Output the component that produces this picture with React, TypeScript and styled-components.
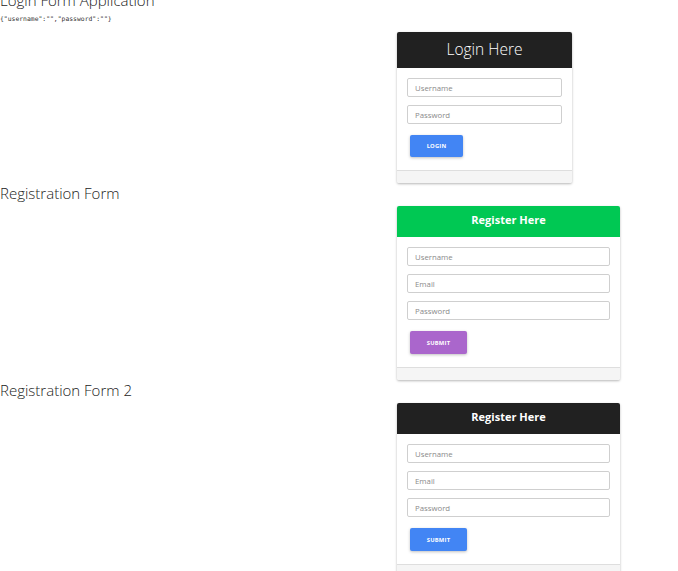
import React from "react";
import styled, { createGlobalStyle } from "styled-components";

const Global = createGlobalStyle`
  html, body { margin: 0; padding: 0; background: #fff; }
  body { font-family: "Open Sans", "Noto Sans", sans-serif; color: #222; }
  * { box-sizing: border-box; }
`;

const Page = styled.div`
  display: flex;
  flex-direction: column;
  width: 678px;
`;

const Title = styled.h2<{ $first?: boolean }>`
  margin: ${(p) => (p.$first ? "-10px 0 0" : "0")};
  font-size: 15px;
  font-weight: 300;
  line-height: 20px;
  color: #222;
`;

const Json = styled.pre`
  margin: 5px 0 0;
  font-family: "DejaVu Sans Mono", monospace;
  font-size: 6.4px;
  line-height: 8px;
  color: #333;
  height: 12px;
`;

const CardRow = styled.div<{ $top: number }>`
  display: flex;
  padding-left: 397px;
  margin-top: ${(p) => p.$top}px;
`;

const Card = styled.div<{ $width: number }>`
  width: ${(p) => p.$width}px;
  background: #fff;
  border-radius: 2px;
  overflow: hidden;
  box-shadow: 0 1px 3px rgba(0, 0, 0, 0.18), 0 1px 2px rgba(0, 0, 0, 0.12);
`;

const Header = styled.div<{ $bg: string; $height: number; $variant: "light" | "bold" }>`
  height: ${(p) => p.$height}px;
  background: ${(p) => p.$bg};
  color: #fff;
  display: flex;
  align-items: center;
  justify-content: center;
  font-size: ${(p) => (p.$variant === "light" ? "15.5px" : "11px")};
  font-weight: ${(p) => (p.$variant === "light" ? 300 : 700)};
  padding-bottom: ${(p) => (p.$variant === "light" ? "2px" : "4px")};
`;

const Body = styled.form`
  display: flex;
  flex-direction: column;
  gap: 8px;
  padding: 10px 10px 13px;
`;

const Input = styled.input`
  height: 19px;
  width: 100%;
  border: 1px solid #cfcfcf;
  border-radius: 2px;
  padding: 0 7px;
  font-family: "Open Sans", sans-serif;
  font-size: 7.8px;
  color: #333;
  outline: none;
  &::placeholder { color: #8a8a8a; }
`;

const Button = styled.button<{ $bg: string; $width: number; $height: number }>`
  margin: 3px 0 0 3px;
  width: ${(p) => p.$width}px;
  height: ${(p) => p.$height}px;
  background: ${(p) => p.$bg};
  color: #fff;
  border: none;
  border-radius: 2px;
  font-family: "Open Sans", sans-serif;
  font-size: 5.8px;
  font-weight: 700;
  letter-spacing: 0.2px;
  text-transform: uppercase;
  box-shadow: 0 1px 3px rgba(0, 0, 0, 0.25);
  padding: 0;
`;

const Footer = styled.div`
  height: 13px;
  background: #f5f5f5;
  border-top: 1px solid #dedede;
`;

function FormCard(props: {
  width: number;
  title: string;
  headerBg: string;
  headerHeight: number;
  variant: "light" | "bold";
  fields: string[];
  button: string;
  buttonBg: string;
  buttonWidth: number;
  buttonHeight: number;
}) {
  return (
    <Card $width={props.width}>
      <Header $bg={props.headerBg} $height={props.headerHeight} $variant={props.variant}>
        {props.title}
      </Header>
      <Body onSubmit={(e) => e.preventDefault()}>
        {props.fields.map((f) => (
          <Input key={f} placeholder={f} type={f === "Password" ? "password" : "text"} />
        ))}
        <Button type="submit" $bg={props.buttonBg} $width={props.buttonWidth} $height={props.buttonHeight}>
          {props.button}
        </Button>
      </Body>
      <Footer />
    </Card>
  );
}

export default function App() {
  return (
    <Page>
      <Global />
      <Title $first>Login Form Application</Title>
      <Json>{'{"username":"","password":""}'}</Json>
      <CardRow $top={5}>
        <FormCard
          width={175}
          title="Login Here"
          headerBg="#212121"
          headerHeight={36}
          variant="light"
          fields={["Username", "Password"]}
          button="Login"
          buttonBg="#4285f4"
          buttonWidth={53}
          buttonHeight={22}
        />
      </CardRow>
      <Title>Registration Form</Title>
      <CardRow $top={3}>
        <FormCard
          width={223}
          title="Register Here"
          headerBg="#00c853"
          headerHeight={31}
          variant="bold"
          fields={["Username", "Email", "Password"]}
          button="Submit"
          buttonBg="#aa66cc"
          buttonWidth={57}
          buttonHeight={23}
        />
      </CardRow>
      <Title>Registration Form 2</Title>
      <CardRow $top={3}>
        <FormCard
          width={223}
          title="Register Here"
          headerBg="#212121"
          headerHeight={31}
          variant="bold"
          fields={["Username", "Email", "Password"]}
          button="Submit"
          buttonBg="#4285f4"
          buttonWidth={57}
          buttonHeight={23}
        />
      </CardRow>
    </Page>
  );
}
